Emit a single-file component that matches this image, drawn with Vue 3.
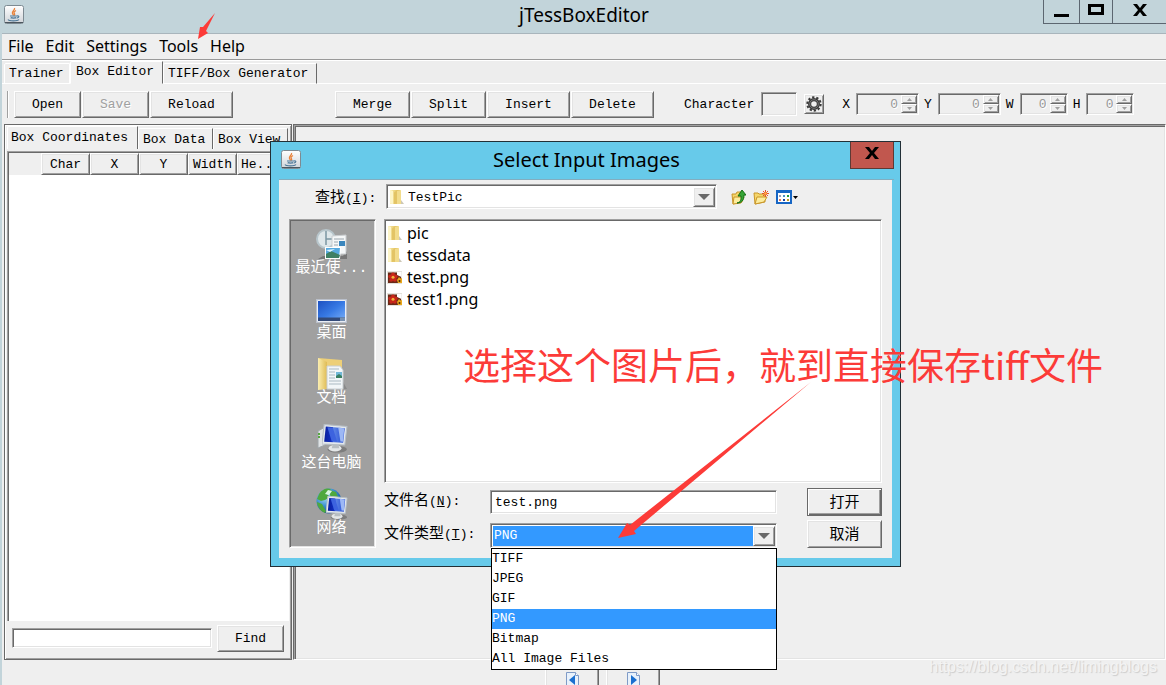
<script setup>
import { ref } from 'vue'

const menus = ['File', 'Edit', 'Settings', 'Tools', 'Help']
const fileButtons = [
  { text: 'Open', size: 'small' },
  { text: 'Save', size: 'small', disabled: true },
  { text: 'Reload', size: 'large' }
]
const boxButtons = [
  { text: 'Merge', size: 'medium' },
  { text: 'Split', size: 'medium' },
  { text: 'Insert', size: 'large' },
  { text: 'Delete', size: 'large' }
]
const spinners = [
  { name: 'X', wide: true },
  { name: 'Y', wide: true },
  { name: 'W', wide: false },
  { name: 'H', wide: false }
]
const columns = ['', 'Char', 'X', 'Y', 'Width', 'He..']
const places = [
  { icon: 'recent', text: '最近使...' },
  { icon: 'desktop', text: '桌面' },
  { icon: 'docs', text: '文档' },
  { icon: 'computer', text: '这台电脑' },
  { icon: 'network', text: '网络' }
]
const files = [
  { name: 'pic', folder: true },
  { name: 'tessdata', folder: true },
  { name: 'test.png', folder: false },
  { name: 'test1.png', folder: false }
]
const types = ['TIFF', 'JPEG', 'GIF', 'PNG', 'Bitmap', 'All Image Files']
const fileType = ref('PNG')
const fileName = ref('test.png')
const query = ref('')
</script>

<template>
  <div class="window">
    <svg class="defs" width="0" height="0" aria-hidden="true">
      <defs>
        <linearGradient id="gPaper" x1="0" y1="0" x2="0" y2="1">
          <stop offset="0" stop-color="#fff" /><stop offset="1" stop-color="#cfd3d8" />
        </linearGradient>
        <linearGradient id="gFold" x1="0" y1="0" x2="1" y2="0">
          <stop offset="0" stop-color="#fbeeb0" /><stop offset="1" stop-color="#dfbc55" />
        </linearGradient>
        <linearGradient id="gDesk" x1="0" y1="0" x2="1" y2="1">
          <stop offset="0" stop-color="#1c4fc0" /><stop offset=".5" stop-color="#3779e4" /><stop offset="1" stop-color="#7cb2fa" />
        </linearGradient>
        <linearGradient id="gScreen" x1="0" y1="0" x2="1" y2="0">
          <stop offset="0" stop-color="#0a1f9c" /><stop offset=".4" stop-color="#1230c4" /><stop offset=".45" stop-color="#5e86e6" /><stop offset="1" stop-color="#2148d2" />
        </linearGradient>
        <radialGradient id="gGlobe" cx=".35" cy=".3" r=".8">
          <stop offset="0" stop-color="#b9e8ff" /><stop offset=".5" stop-color="#3b8fd0" /><stop offset="1" stop-color="#0b3f86" />
        </radialGradient>
        <symbol id="java" viewBox="0 0 20 19">
          <rect x=".5" y=".5" width="19" height="18" rx="2" fill="url(#gPaper)" stroke="#7d8a92" />
          <path d="M1 17.500h18" stroke="#4c565e" />
          <path d="M10.500 3c1 2-3 3-2 5.500.3.9 1 1.300 1.200 2M12 5.500c-2 1-2.500 2-1.500 3.300.5.8 0 1.300-.4 1.700" fill="none" stroke="#e8823a" stroke-width="1.300" />
          <path d="M6 11h7M6.500 13h6M13 11c2.500-.8 2.500 1.600 0 2M4 14.500c1 1.800 9.500 1.800 11 0M7 12.500c1 .8 4 .8 5 0" fill="none" stroke="#4c7899" stroke-width="1.100" />
        </symbol>
        <symbol id="folder" viewBox="0 0 15 16">
          <path d="M1 1h9v14H1z" fill="url(#gFold)" />
          <path d="M1 1l3 1v13l-3-.5z" fill="#fdf5c8" />
          <path d="M5 3.500L8.500 1H11v13l-6 1z" fill="#e3c465" />
          <path d="M8 2l4-1v14H8z" fill="#f2dc8c" />
          <path d="M12 11l3 4h-3z" fill="#ccc7b6" />
        </symbol>
        <symbol id="picture" viewBox="0 0 15 13">
          <path d="M0 0h15v13H0z" fill="#e4e2dc" />
          <path d="M1 1.500h9l4 3V12H1z" fill="#6a2a18" />
          <path d="M10 1h4.500v5L10 4z" fill="#fff" />
          <g fill="#c8261a"><circle cx="6" cy="3.500" r="2" /><circle cx="3.300" cy="5.500" r="2" /><circle cx="8.600" cy="5.500" r="2" /><circle cx="4.200" cy="8.700" r="2" /><circle cx="7.800" cy="8.700" r="2" /></g>
          <circle cx="6" cy="6.300" r="1.500" fill="#f3b63d" />
          <path d="M10 9l2-3 1.500 1.500L15 7v5h-4z" fill="#eaa91d" /><circle cx="12.500" cy="10" r="1" fill="#4a2508" />
        </symbol>
        <symbol id="gear" viewBox="0 0 16 16">
          <circle cx="8" cy="8" r="4.400" fill="none" stroke="#3a3a3a" stroke-width="3.200" />
          <circle cx="8" cy="8" r="6.700" fill="none" stroke="#3a3a3a" stroke-width="2" stroke-dasharray="2.300 1.910" />
          <circle cx="8" cy="8" r="4.300" fill="none" stroke="#777" />
        </symbol>
        <symbol id="recent" viewBox="0 0 32 32">
          <path d="M2 31l5-3h20l4-5v8z" fill="#777" />
          <circle cx="10" cy="11" r="9" fill="#dfe7ea" stroke="#b7c5cb" stroke-width="2" />
          <path d="M10 3v8h6M10 11v6" fill="none" stroke="#7c96a3" stroke-width="1.500" />
          <path d="M16 8l14-1v19H16z" fill="#f5f7f8" stroke="#c9cdd0" />
          <path d="M18 11h10M18 14h4M18 17h4" stroke="#9ba6ae" />
          <path d="M23 13h6v5h-6z" fill="#3b86bd" />
          <path d="M9 19h16l-1 12H9z" fill="#fff" />
          <path d="M10 20h14l-1 10H10z" fill="#56a9df" /><path d="M10 26l5-3 9 4-1 3H10z" fill="#3e7f63" /><path d="M10 22l9-1-5 3z" fill="#d9f2ff" />
        </symbol>
        <symbol id="desktop" viewBox="0 0 32 32">
          <path d="M0 6h31v24H0z" fill="#b9bfca" />
          <path d="M1.500 7.500h28v21h-28z" fill="url(#gDesk)" stroke="#e9edf4" />
          <path d="M2 24.500h27V28H2z" fill="#334a78" /><path d="M24 24.500h5V28h-5z" fill="#7790b0" />
        </symbol>
        <symbol id="docs" viewBox="0 0 32 32">
          <path d="M26 22l5 9h-5z" fill="#8a8a8a" />
          <path d="M2 0l24 2v29H2z" fill="#edcf77" />
          <path d="M2 0l9 4v27l-9 1z" fill="url(#gFold)" />
          <path d="M11 8h13l3 4v19H11z" fill="#f2f6f8" stroke="#c8ced2" />
          <path d="M13 11h10M13 14h6M13 17h6M13 20h6M13 23h12M13 26h12" stroke="#aab9c2" />
          <path d="M20 14h6v6h-6z" fill="#71b8d8" /><path d="M20 18l3-2 3 2v2h-6z" fill="#397f61" />
        </symbol>
        <symbol id="monitor" viewBox="0 0 24 26">
          <ellipse cx="14" cy="23" rx="9" ry="3" fill="#7d7d7d" />
          <ellipse cx="12" cy="22" rx="6" ry="3" fill="#e4e7e8" />
          <path d="M10 18h5l1 4H9z" fill="#b8bec2" />
          <path d="M2 0l21 2-2 17L0 18z" fill="#e4e9ed" stroke="#b6bec5" />
          <path d="M3.500 2l17.500 1.500-1.500 13.500L2 16z" fill="url(#gScreen)" />
          <path d="M5 2.500l5 .4L14 16l-5-.2z" fill="#3d63df" /><path d="M15 3l5.500.6-1 12.400-2.500-.2z" fill="#9db8f5" />
        </symbol>
        <symbol id="computer" viewBox="0 0 32 32">
          <path d="M2 8l7-4v18l-7 3z" fill="#dfe3e5" stroke="#9fa6aa" /><path d="M2 11h2M2 14h2" stroke="#59a843" stroke-width="2" />
          <use href="#monitor" x="6" y="1" width="26" height="29" />
        </symbol>
        <symbol id="network" viewBox="0 0 32 32">
          <circle cx="13" cy="13" r="12.500" fill="url(#gGlobe)" />
          <path d="M3 6c4-6 9-6 12-5l-4 5 3 3-5 3-4 1-4-2zM14 2l6 2 2 5-6 2-2-4zM1 14l5 2 4 7-1 2C4 23 1 18 1 14z" fill="#4fa83e" />
          <path d="M12 2l4 1-3 4-4-1z" fill="#d9f5df" />
          <use href="#monitor" x="10" y="8" width="22" height="24" />
        </symbol>
        <symbol id="page" viewBox="0 0 13 16">
          <path d="M.5.5h9l3 3v12H.5z" fill="#e8f1fb" stroke="#7f9bc7" /><path d="M9.500.5v3h3" fill="#fff" stroke="#7f9bc7" />
        </symbol>
      </defs>
    </svg>

    <header class="titlebar">
      <svg class="appicon" width="20" height="19"><use href="#java" /></svg>
      <h1>jTessBoxEditor</h1>
      <div class="winbtns">
        <button class="min" aria-label="Minimize"><svg width="16" height="14"><path d="M0 11h15v3H0z" /></svg></button>
        <button class="max" aria-label="Maximize"><svg width="16" height="14"><path d="M1.500 2.500h13v8h-13z" fill="none" stroke="#000" stroke-width="3" /></svg></button>
        <button class="close" aria-label="Close"><svg width="14" height="14"><path d="M0 1h4l3 4 3-4h4L9 7l5 6h-4L7 9l-3 4H0l5-6z" /></svg></button>
      </div>
    </header>

    <nav class="menubar">
      <button v-for="m in menus" :key="m">{{ m }}</button>
    </nav>

    <div class="tabs main-tabs" role="tablist">
      <button role="tab" class="tab">Trainer</button>
      <button role="tab" class="tab selected" aria-selected="true">Box Editor</button>
      <button role="tab" class="tab">TIFF/Box Generator</button>
    </div>

    <div class="toolbar">
      <div class="group file-group">
        <button v-for="b in fileButtons" :key="b.text" class="raised btn" :class="b.size" :disabled="b.disabled">{{ b.text }}</button>
      </div>
      <div class="group">
        <button v-for="b in boxButtons" :key="b.text" class="raised btn" :class="b.size">{{ b.text }}</button>
      </div>
      <div class="charbox">
        <label for="char">Character</label>
        <input id="char" class="sunken" type="text" disabled />
        <button class="raised gear" aria-label="Convert"><svg width="16" height="16"><use href="#gear" /></svg></button>
      </div>
      <div class="spins">
        <div v-for="s in spinners" :key="s.name" class="spin">
          <label :for="'spin' + s.name">{{ s.name }}</label>
          <div class="sunken spinbox" :class="{ wide: s.wide }">
            <input :id="'spin' + s.name" type="text" value="0" disabled />
            <div class="arrows">
              <button class="raised" disabled aria-label="Increase"><svg width="5" height="3"><path d="M0 3L2.500 0 5 3z" fill="#a0a0a0" /></svg></button>
              <button class="raised" disabled aria-label="Decrease"><svg width="5" height="3"><path d="M0 0h5L2.500 3z" fill="#a0a0a0" /></svg></button>
            </div>
          </div>
        </div>
      </div>
    </div>

    <main class="split">
      <section class="left">
        <div class="tabs box-tabs" role="tablist">
          <button role="tab" class="tab selected" aria-selected="true">Box Coordinates</button>
          <button role="tab" class="tab">Box Data</button>
          <button role="tab" class="tab">Box View</button>
        </div>
        <div class="tablewrap">
          <table>
            <thead>
              <tr><th v-for="c in columns" :key="c" :class="{ raised: c }">{{ c }}</th></tr>
            </thead>
          </table>
        </div>
        <form class="find" @submit.prevent>
          <input v-model="query" class="sunken" type="text" aria-label="Find" />
          <button class="raised btn small">Find</button>
        </form>
      </section>
      <section class="right"></section>
    </main>

    <footer class="pager">
      <button class="raised" aria-label="Previous Page"><svg width="13" height="16"><use href="#page" /><path d="M9 3v10L3 8z" fill="#1a6fd0" /></svg></button>
      <button class="raised" aria-label="Next Page"><svg width="13" height="16"><use href="#page" /><path d="M4 3v10l6-5z" fill="#1a6fd0" /></svg></button>
    </footer>

    <div class="dialog" role="dialog" aria-labelledby="dlgtitle">
      <header class="dlgbar">
        <svg width="20" height="19"><use href="#java" /></svg>
        <h2 id="dlgtitle">Select Input Images</h2>
        <button aria-label="Close"><svg width="14" height="12"><path d="M0 0h4l3 4 3-4h4L9 6l5 6h-4L7 8l-3 4H0l5-6z" /></svg></button>
      </header>
      <div class="dlgbody">
        <div class="lookin">
          <label for="lookin">查找<span class="mono">(<u>I</u>):</span></label>
          <div class="sunken combo">
            <svg width="15" height="16"><use href="#folder" /></svg>
            <select id="lookin"><option>TestPic</option></select>
            <span class="raised arrow"><svg width="12" height="6"><path d="M0 0h12L6 6z" fill="#696969" /></svg></span>
          </div>
          <div class="tools">
            <button aria-label="Up One Level">
              <svg width="15" height="16"><path d="M1 5h4l1-2h5v10l-9 2z" fill="#f5d66b" stroke="#c9962a" /><path d="M3 8h10l-3 6-8 1z" fill="#fcec9d" stroke="#c9962a" /><path d="M6 14c4-1 4-3 4-7H7l4-6 4 5h-2c0 5-2 8-7 8z" fill="#36a436" stroke="#157015" /></svg>
            </button>
            <button aria-label="Create New Folder">
              <svg width="16" height="16"><path d="M1 4h4l1 1h6v8l-10 2z" fill="#f5d66b" stroke="#c9962a" /><path d="M4 8h10l-3 5-9 2z" fill="#fcec9d" stroke="#c9962a" /><path d="M12.500 1v7M9 4.500h7M10 2l5 5M15 2l-5 5" stroke="#e8502a" stroke-width="1" /><circle cx="12.500" cy="4.500" r="1.300" fill="#ffb347" /></svg>
            </button>
            <button aria-label="View Menu">
              <svg width="24" height="16"><path d="M1 2h14v12H1z" fill="#fff" stroke="#1766c4" stroke-width="2" /><path d="M0 1h16v3H0z" fill="#1766c4" /><path d="M3 6h2v2H3z" fill="#9b9bb5" /><path d="M7 6h2v2H7z" fill="#4a90c8" /><path d="M11 6h2v2h-2z" fill="#239b3a" /><path d="M3 10h2v2H3z" fill="#ed7b59" /><path d="M7 10h2v2H7z" fill="#173fa0" /><path d="M11 10h2v2h-2z" fill="#c79a20" /><path d="M17 7h5l-2.500 3z" /></svg>
            </button>
          </div>
        </div>
        <div class="dlgmain">
          <nav class="sunken places">
            <button v-for="p in places" :key="p.icon">
              <svg width="32" height="32"><use :href="'#' + p.icon" /></svg>
              <span>{{ p.text }}</span>
            </button>
          </nav>
          <div class="filepane">
            <ul class="sunken files">
              <li v-for="f in files" :key="f.name">
                <svg v-if="f.folder" width="15" height="16"><use href="#folder" /></svg>
                <svg v-else width="15" height="13"><use href="#picture" /></svg>
                {{ f.name }}
              </li>
            </ul>
            <div class="fields">
              <div class="inputs">
                <label for="fname">文件名<span class="mono">(<u>N</u>):</span></label>
                <input id="fname" v-model="fileName" class="sunken" type="text" />
                <label for="ftype">文件类型<span class="mono">(<u>T</u>):</span></label>
                <div class="typebox">
                  <div class="sunken combo type">
                    <select id="ftype" v-model="fileType"><option v-for="t in types" :key="t">{{ t }}</option></select>
                    <span class="raised arrow"><svg width="12" height="6"><path d="M0 0h12L6 6z" fill="#696969" /></svg></span>
                  </div>
                  <ul class="popup" role="listbox" aria-label="文件类型">
                    <li v-for="t in types" :key="t" role="option" :aria-selected="t === fileType" :class="{ on: t === fileType }" @click="fileType = t">{{ t }}</li>
                  </ul>
                </div>
              </div>
              <div class="actions">
                <button class="raised default">打开</button>
                <button class="raised">取消</button>
              </div>
            </div>
          </div>
        </div>
      </div>
    </div>

    <svg class="marks" width="830" height="560" aria-hidden="true">
      <path d="M215 13L203 27h-3l-2 12 10-6-2-2z" fill="#fc3b38" />
      <path d="M811 382L630 525l-3-2-9 15 18-4-2-3z" fill="#fc3b38" />
    </svg>
    <p class="note">选择这个图片后，就到直接保存tiff文件</p>
    <p class="watermark">https://blog.csdn.net/limingblogs</p>
  </div>
</template>

<style>
html, body { margin: 0; background: #efefef; }
</style>

<style scoped>
* { box-sizing: border-box; }
.window {
  position: relative;
  display: flex;
  flex-direction: column;
  height: 100vh;
  overflow: hidden;
  border-left: 2px solid #c2d4da;
  background: #efefef;
  color: #000;
  font: 13px "Liberation Mono", "Noto Sans CJK SC", monospace;
}
button, input, select { font: inherit; color: inherit; margin: 0; padding: 0; border: 0; border-radius: 0; background: none; }
button { white-space: nowrap; }
h1, h2, p, ul { margin: 0; padding: 0; font-weight: 400; list-style: none; }
.defs { position: absolute; }
.raised {
  border: 1px solid;
  border-color: #fff #696969 #696969 #fff;
  box-shadow: inset 1px 1px #e3e3e3, inset -1px -1px #a0a0a0;
  background: #efefef;
}
.sunken {
  border: 1px solid;
  border-color: #a0a0a0 #fff #fff #a0a0a0;
  box-shadow: inset 1px 1px #696969, inset -1px -1px #e3e3e3;
}

.titlebar {
  display: grid;
  grid-template-columns: 123px 1fr 123px;
  height: 34px;
  background: #c2d4da;
  border-bottom: 1px solid #a9b5bc;
}
.titlebar h1 { text-align: center; font: 19px/30px "Noto Sans", sans-serif; }
.appicon { margin: 5px 0 0 2px; }
.winbtns { display: flex; height: 24px; border: 1px solid #5c6670; border-width: 0 0 1px 1px; }
.winbtns button { display: flex; align-items: center; justify-content: center; padding-bottom: 3px; }
.winbtns .min { width: 35px; }
.winbtns .max { width: 34px; border: 1px solid #5c6670; border-width: 0 1px; }
.winbtns .close { flex: 1; }

.menubar { display: flex; gap: 12px; height: 26px; padding-left: 6px; border-bottom: 1px solid #999; font: 16px/22px "Noto Sans", sans-serif; }
.menubar button { padding-bottom: 2px; }

.tabs { display: flex; align-items: flex-end; }
.tab { height: 21px; padding: 0 4px; border: 1px solid; border-color: #fff #696969 #fff #fff; border-top-left-radius: 2px; text-align: left; }
.tab.selected { height: 23px; padding-bottom: 2px; border-bottom-color: transparent; }
.main-tabs { height: 24px; padding-left: 2px; border-top: 1px solid #fff; background: #ededed; box-shadow: inset 0 -1px #fff; }
.main-tabs .tab:first-child { width: 66px; border-right-color: #fff; }
.main-tabs .selected { width: 93px; padding-left: 5px; background: #efefef; }
.main-tabs .tab:last-child { width: 154px; }

.toolbar { display: flex; align-items: center; height: 40px; padding-left: 5px; }
.group { display: flex; gap: 1px; }
.file-group { width: 328px; padding-left: 6px; border-left: 1px solid #a0a0a0; box-shadow: inset 1px 0 #fff; }
.btn { height: 27px; }
.btn:disabled { color: #a0a0a0; text-shadow: 1px 1px #fff; }
.small { width: 67px; }
.medium { width: 75px; }
.large { width: 83px; }
.charbox { display: flex; align-items: center; gap: 7px; margin-left: 30px; }
.charbox input { width: 36px; height: 24px; }
.gear { display: flex; align-items: center; justify-content: center; width: 20px; height: 20px; }
.spins { display: flex; gap: 5px; margin-left: 18px; }
.spin { display: flex; align-items: center; gap: 6px; }
.spinbox { display: flex; width: 48px; height: 22px; padding: 1px; }
.spinbox.wide { width: 63px; }
.spinbox input { flex: 1; width: 0; min-width: 0; padding-right: 3px; text-align: right; color: #999; text-shadow: 1px 1px #fff; }
.arrows { display: flex; flex-direction: column; width: 16px; }
.arrows button { flex: 1; display: flex; align-items: center; justify-content: center; }

.split { flex: 1; display: flex; gap: 1px; min-height: 0; padding-left: 2px; }
.left {
  display: flex;
  flex-direction: column;
  width: 288px;
  padding: 2px 2px 0;
  border: 1px solid #696969;
  box-shadow: inset 1px 1px #fff, inset -1px -1px #a0a0a0;
}
.box-tabs { height: 22px; }
.box-tabs .tab { width: 75px; border-bottom: 0; }
.box-tabs .selected { width: 131px; padding-left: 3px; }
.tablewrap { flex: 1; margin-top: 2px; padding: 1px 0 0 1px; overflow: hidden; border: 1px solid #a0a0a0; border-width: 1px 0 0 1px; box-shadow: inset 1px 1px #696969; background: #fff; }
table { width: 100%; table-layout: fixed; border-collapse: separate; border-spacing: 0; }
th { width: 49px; height: 22px; padding: 0; font-weight: 400; background: #efefef; }
th:first-child { width: 32px; }
th:last-child { width: auto; padding-left: 3px; text-align: left; }
.find { display: flex; align-items: center; gap: 5px; height: 38px; padding: 0 5px 4px; }
.find input { flex: 1; min-width: 0; height: 20px; background: #fff; }
.right { flex: 1; border: 1px solid; border-color: #696969 #fff #fff #696969; box-shadow: inset 1px 1px #a0a0a0, inset 2px 2px #696969, inset -1px -1px #e3e3e3; }
.pager { display: flex; justify-content: center; gap: 7px; height: 25px; padding: 5px 0 0 37px; overflow: hidden; }
.pager button { display: flex; justify-content: center; width: 54px; height: 28px; padding-top: 6px; }

.dialog {
  position: absolute;
  top: 141px;
  left: 268px;
  width: 631px;
  padding: 0 8px 8px;
  border: 1px solid #222f36;
  background: #67caea;
}
.dlgbar { display: grid; grid-template-columns: 44px 1fr 44px; height: 38px; margin-right: -2px; border-bottom: 1px solid #83adbf; }
.dlgbar > svg { margin: 8px 0 0 2px; }
.dlgbar h2 { text-align: center; font: 20px/36px "Noto Sans", sans-serif; }
.dlgbar button { height: 27px; border: 1px solid #5e3934; border-top: 0; background: #c1574e; }
.dlgbody { padding: 4px 10px 10px; background: #efefef; }
.dlgbody label { font-size: 15px; font-family: "Noto Sans CJK SC", sans-serif; line-height: 18px; white-space: nowrap; }
.dlgbody .mono { font: 13px "Liberation Mono", monospace; }
.lookin { display: flex; align-items: center; padding-left: 26px; }
.lookin label { width: 71px; }
.combo { display: flex; align-items: center; height: 25px; padding: 2px 1px 1px 2px; background: #fff; }
.lookin .combo { flex: 0 1 331px; gap: 4px; }
.combo select { flex: 1; align-self: stretch; min-width: 0; appearance: none; }
.arrow { display: flex; align-items: center; justify-content: center; align-self: stretch; width: 22px; pointer-events: none; }
.tools { display: flex; align-items: center; gap: 7px; margin-left: 14px; }
.tools button { display: flex; }
.dlgmain { display: flex; gap: 8px; margin-top: 10px; }
.places { display: flex; flex-direction: column; gap: 16px; width: 87px; padding: 8px 2px 9px 0; background: #a0a0a0; }
.places button { display: flex; flex-direction: column; align-items: center; color: #fff; font: 15px/17px "Liberation Mono", "Noto Sans CJK SC", monospace; }
.filepane { flex: 1; min-width: 0; }
.files { height: 264px; padding: 2px; background: #fff; font: 16px/20px "Noto Sans", sans-serif; }
.files li { display: flex; align-items: center; gap: 5px; height: 22px; }
.fields { display: flex; justify-content: space-between; margin-top: 5px; }
.inputs { display: grid; grid-template-columns: 106px 287px; row-gap: 8px; align-items: start; padding-top: 2px; }
.inputs input { height: 24px; padding: 0 4px; background: #fff; }
.typebox { position: relative; }
.type select { padding: 0 1px; background: #3399ff; color: #fff; }
.popup { position: absolute; top: 25px; left: 1px; right: 0; border: 1px solid #000; background: #fff; line-height: 20px; }
.popup .on { background: #3399ff; color: #fff; }
.actions { display: flex; flex-direction: column; gap: 4px; width: 75px; }
.actions button { height: 28px; padding-bottom: 2px; font: 15px/20px "Noto Sans CJK SC", sans-serif; }
.actions .default { outline: 1px solid #696969; outline-offset: -1px; box-shadow: inset 1px 1px #fff, inset -1px -1px #696969, inset -2px -2px #a0a0a0; }

.marks { position: absolute; top: 0; left: -2px; pointer-events: none; }
.note { position: absolute; top: 338px; left: 461px; color: #fc3b38; font: 37px/52px "Noto Sans CJK SC", sans-serif; white-space: nowrap; pointer-events: none; }
.watermark { position: absolute; right: 9px; bottom: 8px; color: #f3f3f3; text-shadow: 1px 1px 1px #ccc; font: 16px/20px "Liberation Sans", sans-serif; }
</style>
